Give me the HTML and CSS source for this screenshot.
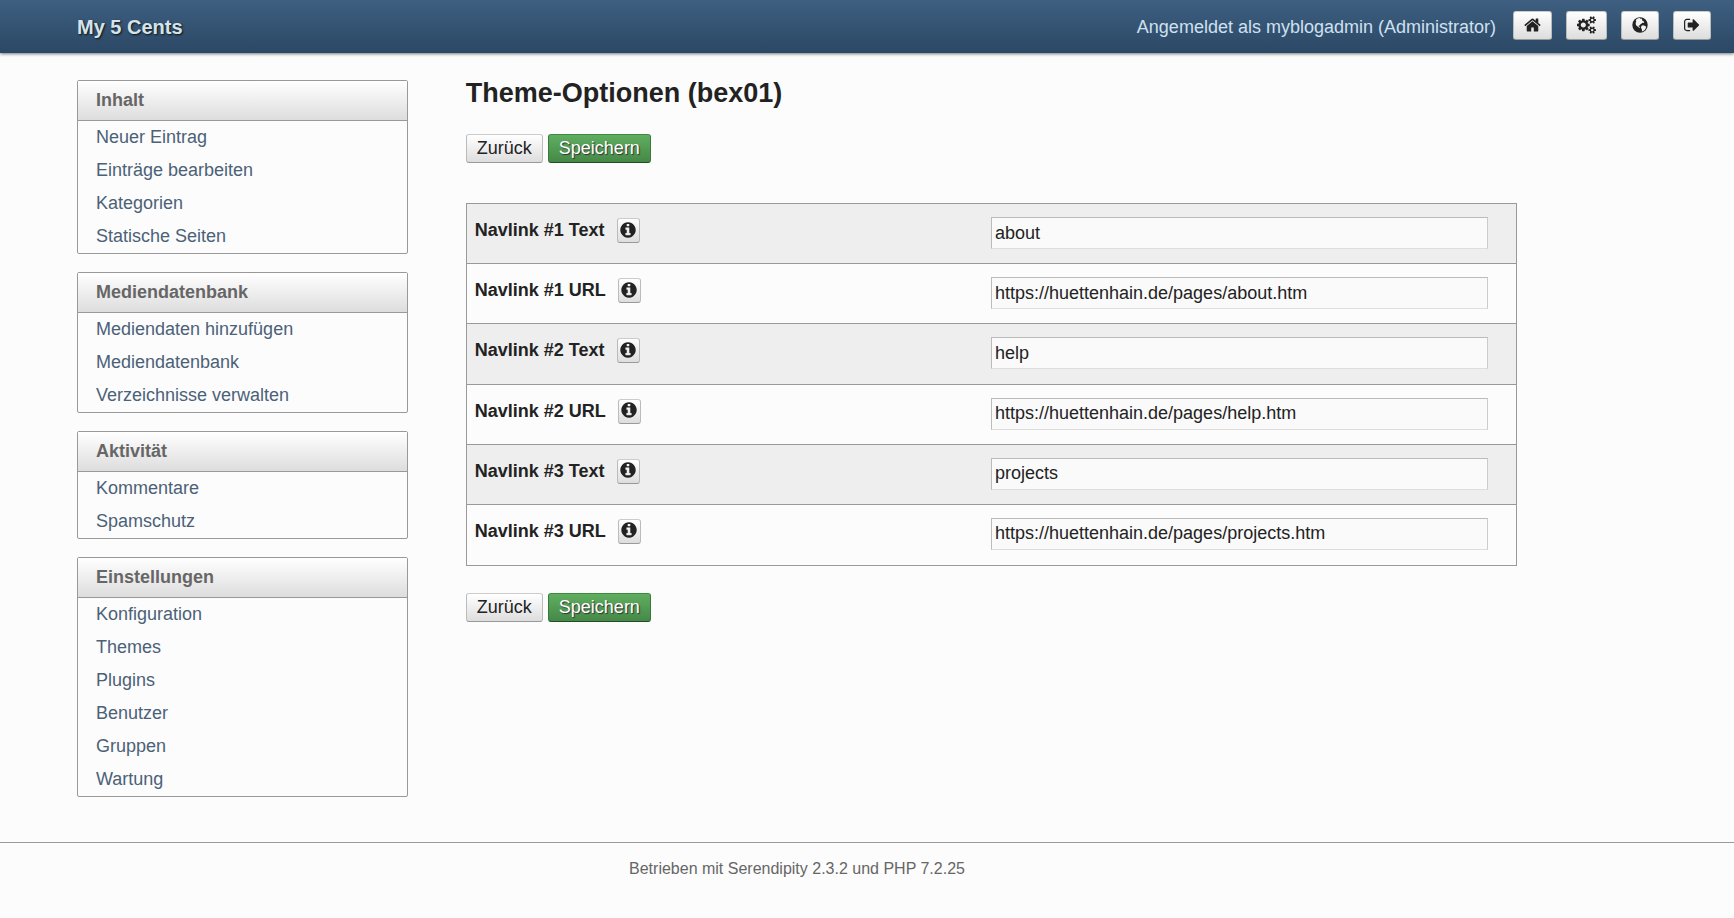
FILE: index.html
```html
<!DOCTYPE html>
<html lang="de">
<head>
<meta charset="utf-8">
<meta name="viewport" content="width=device-width, initial-scale=1">
<title>Theme-Optionen (bex01)</title>
<link rel="stylesheet" href="styles.css">
</head>
<body>
<svg class="sprite" aria-hidden="true">
  <symbol id="i-home" viewBox="64 0 1664 1792"><path d="M1472 992v480q0 26-19 45t-45 19h-384v-384h-256v384h-384q-26 0-45-19t-19-45v-480q0-1 .5-3t.5-3l575-474 575 474q1 2 1 6zm223-69l-62 74q-8 9-21 11h-3q-13 0-21-7l-692-577-692 577q-12 8-24 7-13-2-21-11l-62-74q-8-10-7-23.5t11-21.5l719-599q32-26 76-26t76 26l244 204v-195q0-14 9-23t23-9h192q14 0 23 9t9 23v408l219 182q10 8 11 21.5t-7 23.5z"/></symbol>
  <symbol id="i-cogs" viewBox="0 0 1920 1792"><path d="M896 896q0-106-75-181t-181-75-181 75-75 181 75 181 181 75 181-75 75-181zm768 512q0-52-38-90t-90-38-90 38-38 90q0 53 37.5 90.5t90.5 37.5 90.5-37.5 37.5-90.5zm0-1024q0-52-38-90t-90-38-90 38-38 90q0 53 37.5 90.5t90.5 37.5 90.5-37.5 37.5-90.5zm-384 421v185q0 10-7 19.5t-16 10.5l-155 24q-11 35-32 76 34 48 90 115 7 11 7 20 0 12-7 19-23 30-82.500 89.500t-78.500 59.500q-11 0-21-7l-115-90q-37 19-77 31-11 108-23 155-7 24-30 24h-186q-11 0-20-7.500t-10-17.500l-23-153q-34-10-75-31l-118 89q-7 7-20 7-11 0-21-8-144-133-144-160 0-9 7-19 10-14 41-53t47-61q-23-44-35-82l-152-24q-10-1-17-9.500t-7-19.500v-185q0-10 7-19.500t16-10.500l155-24q11-35 32-76-34-48-90-115-7-11-7-20 0-12 7-20 22-30 82-89t79-59q11 0 21 7l115 90q34-18 77-32 11-108 23-154 7-24 30-24h186q11 0 20 7.500t10 17.500l23 153q34 10 75 31l118-89q8-7 20-7 11 0 21 8 144 133 144 160 0 8-7 19-12 16-42 54t-45 60q23 48 34 82l152 23q10 2 17 10.500t7 19.500zm640 533v140q0 16-149 31-12 27-30 52 51 113 51 138 0 4-4 7-122 71-124 71-8 0-46-47t-52-68q-20 2-30 2t-30-2q-14 21-52 68t-46 47q-2 0-124-71-4-3-4-7 0-25 51-138-18-25-30-52-149-15-149-31v-140q0-16 149-31 13-29 30-52-51-113-51-138 0-4 4-7 4-2 35-20t59-34 30-16q8 0 46 46.500t52 67.500q20-2 30-2t30 2q51-71 92-112l6-2q4 0 124 70 4 3 4 7 0 25-51 138 17 23 30 52 149 15 149 31zm0-1024v140q0 16-149 31-12 27-30 52 51 113 51 138 0 4-4 7-122 71-124 71-8 0-46-47t-52-68q-20 2-30 2t-30-2q-14 21-52 68t-46 47q-2 0-124-71-4-3-4-7 0-25 51-138-18-25-30-52-149-15-149-31v-140q0-16 149-31 13-29 30-52-51-113-51-138 0-4 4-7 4-2 35-20t59-34 30-16q8 0 46 46.500t52 67.500q20-2 30-2t30 2q51-71 92-112l6-2q4 0 124 70 4 3 4 7 0 25-51 138 17 23 30 52 149 15 149 31z"/></symbol>
  <symbol id="i-globe" viewBox="128 0 1536 1792"><circle cx="896" cy="896" r="768"/><path fill="#f4f4f4" d="M560 300l150-70 170-20 40 70 110-30 90 90-30 110 140 60 90 110-90 70-110-20-80 90-110 60-40 110-100 10-50 80 110 40 60 100-100 10-110-90-130-90-90-150-20-150 60-130 -40-120zM1060 980l140-60 160 50 150 110-50 170-120 160-180 110-90 20 30-160-70-130-40-140z"/></symbol>
  <symbol id="i-exit" viewBox="64 0 1664 1792"><path d="M704 1440q0 4 1 20t.5 26.500-3 23.500-10 19.500-20.500 6.500h-320q-119 0-203.500-84.500t-84.500-203.500v-704q0-119 84.500-203.500t203.500-84.500h320q13 0 22.500 9.500t9.500 22.500q0 4 1 20t.5 26.500-3 23.500-10 19.500-20.500 6.500h-320q-66 0-113 47t-47 113v704q0 66 47 113t113 47h312l11.500 1 11.500 3 8 5.500 7 9 2 13.500zm928-544q0 26-19 45l-544 544q-19 19-45 19t-45-19-19-45v-288h-448q-26 0-45-19t-19-45v-384q0-26 19-45t45-19h448v-288q0-26 19-45t45-19 45 19l544 544q19 19 19 45z"/></symbol>
  <symbol id="i-info" viewBox="128 0 1536 1792"><path d="M1152 1376v-160q0-14-9-23t-23-9h-96v-512q0-14-9-23t-23-9h-320q-14 0-23 9t-9 23v160q0 14 9 23t23 9h96v320h-96q-14 0-23 9t-9 23v160q0 14 9 23t23 9h448q14 0 23-9t9-23zm-128-896v-160q0-14-9-23t-23-9h-192q-14 0-23 9t-9 23v160q0 14 9 23t23 9h192q14 0 23-9t9-23zm640 416q0 209-103 385.500t-279.500 279.500-385.500 103-385.500-103-279.500-279.500-103-385.500 103-385.500 279.500-279.500 385.500-103 385.500 103 279.500 279.500 103 385.500z"/></symbol>
</svg>

<header class="top">
  <a class="brand" href="#">My 5 Cents</a>
  <div class="user">
    <p class="greeting">Angemeldet als myblogadmin (Administrator)</p>
    <nav class="user-nav" aria-label="Benutzermenü">
      <a class="button icon-link" href="#" aria-label="Startseite"><svg class="icon" width="17" height="18"><use href="#i-home"/></svg></a>
      <a class="button icon-link" href="#" aria-label="Eigene Einstellungen"><svg class="icon" width="19" height="18"><use href="#i-cogs"/></svg></a>
      <a class="button icon-link" href="#" aria-label="Zum Blog"><svg class="icon" width="16" height="18"><use href="#i-globe"/></svg></a>
      <a class="button icon-link" href="#" aria-label="Abmelden"><svg class="icon" width="16" height="18"><use href="#i-exit"/></svg></a>
    </nav>
  </div>
</header>

<div class="layout">
  <nav class="sidebar" aria-label="Hauptmenü">
    <section class="menu">
      <h2 class="menu-title">Inhalt</h2>
      <ul class="menu-list">
        <li><a href="#">Neuer Eintrag</a></li>
        <li><a href="#">Einträge bearbeiten</a></li>
        <li><a href="#">Kategorien</a></li>
        <li><a href="#">Statische Seiten</a></li>
      </ul>
    </section>
    <section class="menu">
      <h2 class="menu-title">Mediendatenbank</h2>
      <ul class="menu-list">
        <li><a href="#">Mediendaten hinzufügen</a></li>
        <li><a href="#">Mediendatenbank</a></li>
        <li><a href="#">Verzeichnisse verwalten</a></li>
      </ul>
    </section>
    <section class="menu">
      <h2 class="menu-title">Aktivität</h2>
      <ul class="menu-list">
        <li><a href="#">Kommentare</a></li>
        <li><a href="#">Spamschutz</a></li>
      </ul>
    </section>
    <section class="menu">
      <h2 class="menu-title">Einstellungen</h2>
      <ul class="menu-list">
        <li><a href="#">Konfiguration</a></li>
        <li><a href="#">Themes</a></li>
        <li><a href="#">Plugins</a></li>
        <li><a href="#">Benutzer</a></li>
        <li><a href="#">Gruppen</a></li>
        <li><a href="#">Wartung</a></li>
      </ul>
    </section>
  </nav>

  <main class="content">
    <h1 class="title">Theme-Optionen (bex01)</h1>
    <form class="form">
      <div class="actions">
        <a class="button" href="#">Zurück</a>
        <button class="button save" type="submit">Speichern</button>
      </div>
      <div class="options">
        <div class="option">
          <div class="option-name"><label for="n1t">Navlink #1 Text</label><button class="button info" type="button" aria-label="Info"><svg class="icon" width="16" height="18"><use href="#i-info"/></svg></button></div>
          <input class="field" id="n1t" type="text" value="about">
        </div>
        <div class="option">
          <div class="option-name"><label for="n1u">Navlink #1 URL</label><button class="button info" type="button" aria-label="Info"><svg class="icon" width="16" height="18"><use href="#i-info"/></svg></button></div>
          <input class="field" id="n1u" type="text" value="https://huettenhain.de/pages/about.htm">
        </div>
        <div class="option">
          <div class="option-name"><label for="n2t">Navlink #2 Text</label><button class="button info" type="button" aria-label="Info"><svg class="icon" width="16" height="18"><use href="#i-info"/></svg></button></div>
          <input class="field" id="n2t" type="text" value="help">
        </div>
        <div class="option">
          <div class="option-name"><label for="n2u">Navlink #2 URL</label><button class="button info" type="button" aria-label="Info"><svg class="icon" width="16" height="18"><use href="#i-info"/></svg></button></div>
          <input class="field" id="n2u" type="text" value="https://huettenhain.de/pages/help.htm">
        </div>
        <div class="option">
          <div class="option-name"><label for="n3t">Navlink #3 Text</label><button class="button info" type="button" aria-label="Info"><svg class="icon" width="16" height="18"><use href="#i-info"/></svg></button></div>
          <input class="field" id="n3t" type="text" value="projects">
        </div>
        <div class="option">
          <div class="option-name"><label for="n3u">Navlink #3 URL</label><button class="button info" type="button" aria-label="Info"><svg class="icon" width="16" height="18"><use href="#i-info"/></svg></button></div>
          <input class="field" id="n3u" type="text" value="https://huettenhain.de/pages/projects.htm">
        </div>
      </div>
      <div class="actions">
        <a class="button" href="#">Zurück</a>
        <button class="button save" type="submit">Speichern</button>
      </div>
    </form>
  </main>
</div>

<footer class="foot">
  <p class="foot-text">Betrieben mit Serendipity 2.3.2 und PHP 7.2.25</p>
</footer>
</body>
</html>
```
FILE: styles.css
```css
* {
  box-sizing: border-box;
}

body {
  margin: 0;
  background: #fcfcfc;
  color: #222;
  font: 18px/27px Arial, "Liberation Sans", sans-serif;
}

h1, h2, p, ul {
  margin: 0;
  padding: 0;
}

a {
  color: inherit;
  text-decoration: none;
}

.sprite {
  display: none;
}

.icon {
  display: block;
  fill: currentColor;
}

/* Header */
.top {
  display: flex;
  align-items: flex-start;
  justify-content: space-between;
  min-height: 53px;
  padding: 11px 23px 11px 77px;
  background: linear-gradient(#3e5f81, #2b4865);
  box-shadow: 0 1px 3px #777;
  color: #cfe0f0;
}

.brand,
.greeting {
  padding-top: 3px;
}

.brand {
  font-size: 20px;
  font-weight: bold;
  color: #d5e4ec;
  text-shadow: 1px 1px 2px #111;
}

.user,
.user-nav {
  display: flex;
  align-items: flex-start;
}

.user {
  gap: 17px;
}

.user-nav {
  gap: 14px;
}

/* Buttons */
.button {
  display: inline-flex;
  align-items: center;
  justify-content: center;
  height: 29px;
  padding: 0 10px;
  border: 1px solid;
  border-color: #ccc #bbb #999;
  border-radius: 3px;
  background: linear-gradient(#fff, #ddd);
  color: #222;
  font: 18px/27px Arial, "Liberation Sans", sans-serif;
}

.save {
  border-color: #3f8a43 #377a3b #234d25;
  background: linear-gradient(#5fae60, #468847);
  color: #fff;
  text-shadow: 1px 1px 1px #333;
}

.icon-link {
  padding-bottom: 2px;
}

.info {
  width: 23px;
  height: 25px;
  padding: 0 0 2px;
}

/* Page columns */
.layout {
  display: grid;
  grid-template-columns: 23% 73%;
  justify-content: space-between;
  max-width: 1440px;
  margin: 27px 24px 45px 77px;
}

.sidebar {
  display: flex;
  flex-direction: column;
  gap: 18px;
}

.menu {
  border: 1px solid #999;
  border-radius: 2px;
}

.menu-title {
  padding: 6px 18px;
  border-bottom: 1px solid #999;
  background: linear-gradient(#fff, #ddd);
  color: #666;
  font-size: 18px;
}

.menu-list {
  list-style: none;
}

.menu-list a {
  display: block;
  padding: 3px 18px;
  color: #4b6178;
}

/* Options form */
.title {
  margin-bottom: 27px;
  font-size: 27px;
}

.actions {
  display: flex;
  gap: 5px;
}

.options {
  display: grid;
  grid-auto-rows: 1fr;
  min-height: 363px;
  margin: 40px 0 27px;
  border: 1px solid #999;
}

.option {
  display: grid;
  grid-template-columns: 27fr 26fr;
  align-items: start;
  padding: 13px 28px 13px 8px;
}

.option:not(:last-child) {
  border-bottom: 1px solid #999;
}

.option:nth-child(odd) {
  background: #eee;
}

.option-name {
  display: flex;
  align-items: center;
  gap: 12px;
  font-weight: bold;
}

.field {
  width: 100%;
  height: 32px;
  padding: 0 3px;
  border: 1px solid;
  border-color: #bbb #ccc #ddd #bbb;
  background: #fafafa;
  color: #222;
  font: 18px/27px Arial, "Liberation Sans", sans-serif;
}

/* Footer */
.foot {
  padding: 12px 24px 36px 77px;
  border-top: 1px solid #999;
}

.foot-text {
  max-width: 1440px;
  color: #666;
  font-size: 16px;
  text-align: center;
}
```
